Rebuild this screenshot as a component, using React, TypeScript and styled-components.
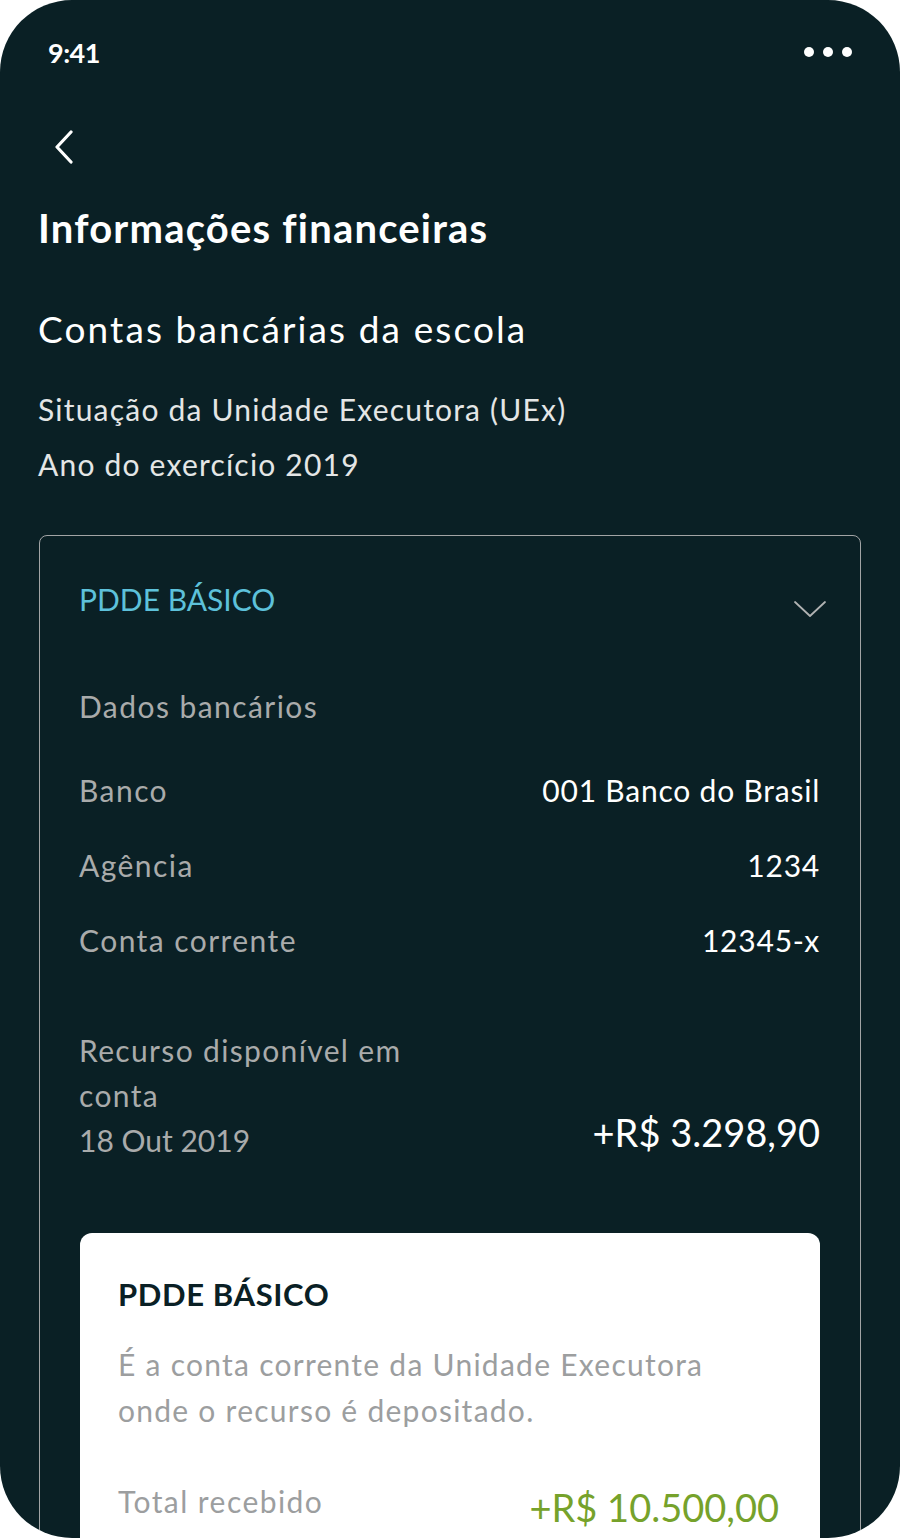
import React from 'react';
import styled, { createGlobalStyle } from 'styled-components';

const GlobalStyle = createGlobalStyle`
	html, body {
		margin: 0;
		padding: 0;
		background: #fff;
	}
	body {
		font-family: Lato, 'Open Sans', sans-serif;
		-webkit-font-smoothing: antialiased;
	}
`;

const bankRows = [
	{ label: 'Banco', value: '001 Banco do Brasil' },
	{ label: 'Agência', value: '1234' },
	{ label: 'Conta corrente', value: '12345-x' },
];

const ChevronLeft = (): JSX.Element => (
	<svg width="22" height="36" viewBox="0 0 22 36" fill="none">
		<path d="M18 2 L4 17 L18 32" stroke="#fff" strokeWidth="3.2" strokeLinecap="round" strokeLinejoin="round" />
	</svg>
);

const ChevronDown = (): JSX.Element => (
	<svg width="34" height="20" viewBox="0 0 34 20" fill="none">
		<path d="M2 3 L17 17 L32 3" stroke="#b0b2b2" strokeWidth="1.8" strokeLinecap="round" strokeLinejoin="round" />
	</svg>
);

const App = (): JSX.Element => {
	return (
		<>
			<GlobalStyle />
			<Screen>
				<StatusBar>
					<Clock>9:41</Clock>
					<Dots>
						<Dot />
						<Dot />
						<Dot />
					</Dots>
				</StatusBar>

				<Content>
					<BackButton aria-label="Voltar">
						<ChevronLeft />
					</BackButton>
					<PageTitle>Informações financeiras</PageTitle>
					<SectionTitle>Contas bancárias da escola</SectionTitle>
					<SubLines>
						<SubLine>Situação da Unidade Executora (UEx)</SubLine>
						<SubLine>Ano do exercício 2019</SubLine>
					</SubLines>

					<Accordion>
						<AccordionHeader>
							<AccordionTitle>PDDE BÁSICO</AccordionTitle>
							<ChevronWrap>
								<ChevronDown />
							</ChevronWrap>
						</AccordionHeader>

						<GroupLabel>Dados bancários</GroupLabel>
						<Rows>
							{bankRows.map((row) => (
								<Row key={row.label}>
									<RowLabel>{row.label}</RowLabel>
									<RowValue>{row.value}</RowValue>
								</Row>
							))}
						</Rows>

						<BalanceRow>
							<BalanceLabel>
								Recurso disponível em conta
								<BalanceDate>18 Out 2019</BalanceDate>
							</BalanceLabel>
							<BalanceValue>+R$ 3.298,90</BalanceValue>
						</BalanceRow>

						<InfoCard>
							<InfoTitle>PDDE BÁSICO</InfoTitle>
							<InfoText>É a conta corrente da Unidade Executora onde o recurso é depositado.</InfoText>
							<TotalRow>
								<TotalLabel>Total recebido</TotalLabel>
								<TotalValue>+R$ 10.500,00</TotalValue>
							</TotalRow>
						</InfoCard>
					</Accordion>
				</Content>
			</Screen>
		</>
	);
};

const Screen = styled.div`
	width: 900px;
	height: 1538px;
	background-color: #0a2025;
	border-radius: 72px;
	overflow: hidden;
	color: #fff;
`;

const StatusBar = styled.div`
	height: 104px;
	padding: 0 48px;
	display: flex;
	align-items: center;
	justify-content: space-between;
`;

const Clock = styled.span`
	font-size: 27px;
	font-weight: 700;
	letter-spacing: -0.5px;
	line-height: 1;
`;

const Dots = styled.div`
	display: flex;
	gap: 9px;
`;

const Dot = styled.span`
	width: 10px;
	height: 10px;
	border-radius: 50%;
	background: #fff;
`;

const Content = styled.div`
	padding: 0 39px;
	display: flex;
	flex-direction: column;
`;

const BackButton = styled.button`
	background: none;
	border: none;
	padding: 0;
	margin: 26px 0 0 14px;
	width: 22px;
	height: 36px;
	display: flex;
	cursor: pointer;
`;

const PageTitle = styled.h1`
	margin: 38px 0 0 -1px;
	font-size: 40px;
	font-weight: 700;
	line-height: 48px;
	letter-spacing: 0.03em;
`;

const SectionTitle = styled.h2`
	margin: 55px 0 0 -1px;
	font-size: 37px;
	font-weight: 400;
	line-height: 44px;
	letter-spacing: 0.057em;
`;

const SubLines = styled.div`
	margin-top: 31px;
	display: flex;
	flex-direction: column;
`;

const SubLine = styled.div`
	margin-left: -1px;
	font-size: 30px;
	line-height: 55px;
	letter-spacing: 0.04em;
	color: #e4e6e6;
`;

const Accordion = styled.div`
	margin-top: 43px;
	border: 1.5px solid #a2a4a5;
	border-radius: 8px;
	padding: 0 40px;
	display: flex;
	flex-direction: column;
`;

const AccordionHeader = styled.div`
	display: flex;
	align-items: center;
	justify-content: space-between;
	padding-top: 43px;
`;

const AccordionTitle = styled.div`
	margin-left: -1px;
	font-size: 30px;
	line-height: 40px;
	color: #5dc1da;
`;

const ChevronWrap = styled.div`
	display: flex;
	margin: 19px -7px 0 0;
`;

const GroupLabel = styled.div`
	margin: 67px 0 0 -1px;
	font-size: 30px;
	line-height: 40px;
	letter-spacing: 0.048em;
	color: #a9abab;
`;

const Rows = styled.div`
	margin-top: 44px;
	display: flex;
	flex-direction: column;
	gap: 35px;
`;

const Row = styled.div`
	display: flex;
	justify-content: space-between;
	align-items: center;
	font-size: 30px;
	line-height: 40px;
`;

const RowLabel = styled.span`
	margin-left: -1px;
	letter-spacing: 0.048em;
	color: #a9abab;
`;

const RowValue = styled.span`
	letter-spacing: 0.026em;
	color: #fff;
`;

const BalanceRow = styled.div`
	margin-top: 68px;
	display: flex;
	justify-content: space-between;
	align-items: flex-end;
`;

const BalanceLabel = styled.div`
	margin-left: -1px;
	max-width: 360px;
	font-size: 30px;
	line-height: 45px;
	letter-spacing: 0.045em;
	color: #a9abab;
`;

const BalanceDate = styled.div`
	letter-spacing: 0;
`;

const BalanceValue = styled.div`
	font-size: 38px;
	line-height: 62px;
	color: #fff;
`;

const InfoCard = styled.div`
	margin-top: 70px;
	background: #fff;
	border-radius: 12px;
	padding: 41px 41px 60px 38px;
	display: flex;
	flex-direction: column;
`;

const InfoTitle = styled.div`
	font-size: 31px;
	font-weight: 700;
	line-height: 40px;
	letter-spacing: 0.02em;
	color: #0a2025;
`;

const InfoText = styled.div`
	margin-top: 27px;
	max-width: 600px;
	font-size: 30px;
	line-height: 46px;
	letter-spacing: 0.042em;
	color: #9c9e9f;
`;

const TotalRow = styled.div`
	margin-top: 48px;
	display: flex;
	justify-content: space-between;
	align-items: flex-start;
`;

const TotalLabel = styled.div`
	font-size: 30px;
	line-height: 40px;
	letter-spacing: 0.048em;
	color: #9c9e9f;
`;

const TotalValue = styled.div`
	font-size: 38px;
	line-height: 52px;
	color: #76a22b;
`;

export default App;
